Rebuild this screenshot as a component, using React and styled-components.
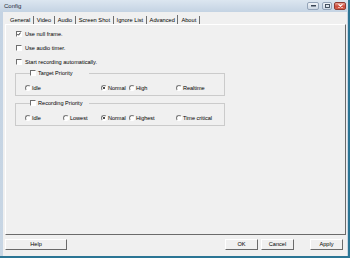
import React from 'react';
import styled, { createGlobalStyle } from 'styled-components';

const Global = createGlobalStyle`
  html, body { margin: 0; padding: 0; background: #f0f0f0; }
  body { font-family: "Liberation Sans", Arial, sans-serif; }
`;

const Window = styled.div`
  width: 350px;
  height: 258px;
  box-sizing: border-box;
  display: flex;
  flex-direction: column;
  background: linear-gradient(#dce6f0, #c4d3e3 12px, #c8d6e4);
  border-right: 2px solid #2b7594;
  border-bottom: 2px solid #2b7594;
  font-size: 5.6px;
  color: #000;
`;

const TitleBar = styled.div`
  flex: none;
  height: 12px;
  display: flex;
  align-items: center;
  padding: 0 2px 0 4px;
`;

const Title = styled.span`
  flex: 1;
  font-size: 6px;
  color: #1d2a38;
`;

const Controls = styled.div`
  display: flex;
  align-items: center;
`;

const Ctrl = styled.div`
  width: ${p => p.$w}px;
  height: 8px;
  margin-left: ${p => p.$ml}px;
  box-sizing: border-box;
  border: 1px solid ${p => (p.$close ? '#8e3b33' : '#94a4b8')};
  border-radius: 2px;
  background: ${p =>
    p.$close
      ? 'linear-gradient(#eba596, #cd4b3d 55%, #d8634f)'
      : 'linear-gradient(#f1f5f9, #dbe3ec 55%, #ced9e5)'};
  display: flex;
  align-items: center;
  justify-content: center;
`;

const Client = styled.div`
  flex: 1;
  margin: 0 1px 0 3px;
  background: #f0f0f0;
  display: flex;
  flex-direction: column;
  padding: 2px 1px 6px 2px;
  min-height: 0;
`;

const TabStrip = styled.div`
  flex: none;
  height: 10px;
  display: flex;
  align-items: flex-start;
  padding-left: 2px;
  font-size: 5.7px;
`;

const Tab = styled.div`
  height: ${p => (p.$active ? 9 : 8)}px;
  margin-top: ${p => (p.$active ? 1 : 2)}px;
  padding: 0 2.5px 0 3px;
  display: flex;
  align-items: center;
  border-right: 1px solid #6f6f6f;
  white-space: nowrap;
`;

const Panel = styled.div`
  flex: 1;
  box-sizing: border-box;
  border: 1px solid;
  border-color: #ffffff #6b6b6b #6b6b6b #ffffff;
  padding: 5px 0 0 9px;
  display: flex;
  flex-direction: column;
`;

const Rows = styled.div`
  display: flex;
  flex-direction: column;
  gap: 6px;
`;

const CheckRow = styled.label`
  height: 8px;
  display: flex;
  align-items: center;
  gap: 3px;
  padding-left: 1px;
  white-space: nowrap;
`;

const Box = styled.span`
  flex: none;
  width: 6px;
  height: 6px;
  box-sizing: border-box;
  border: 1px solid;
  border-color: #6e6e6e #ffffff #ffffff #6e6e6e;
  background: #ffffff;
  display: inline-flex;
  align-items: center;
  justify-content: center;
`;

const Group = styled.fieldset`
  margin: ${p => p.$mt}px 0 0 0;
  width: 210px;
  box-sizing: border-box;
  border: 1px solid #cbcbcb;
  padding: 0 0 3px 9px;
  min-inline-size: 0;
`;

const Legend = styled.legend`
  margin-left: 5px;
  padding: 0;
  width: 59px;
  height: 8px;
  display: flex;
  align-items: center;
  gap: 2px;
  white-space: nowrap;
`;

const RadioGrid = styled.div`
  margin-top: 7px;
  height: 8px;
  display: grid;
  grid-template-columns: 38px 38px 28px 47px auto;
  align-items: center;
`;

const RadioItem = styled.label`
  grid-column: ${p => p.$col};
  display: flex;
  align-items: center;
  gap: 1px;
  white-space: nowrap;
  letter-spacing: -0.05px;
`;

const RadioDot = styled.span`
  flex: none;
  width: 6px;
  height: 6px;
  box-sizing: border-box;
  border-radius: 50%;
  border: 1px solid;
  border-color: #777777 #ffffff #ffffff #777777;
  background: #ffffff;
  display: inline-flex;
  align-items: center;
  justify-content: center;
  &::after {
    content: '';
    width: 2px;
    height: 2px;
    border-radius: 50%;
    background: ${p => (p.$on ? '#111' : 'transparent')};
  }
`;

const ButtonRow = styled.div`
  flex: none;
  margin-top: 4px;
  height: 11px;
  display: flex;
  padding-right: 3px;
`;

const Button = styled.button`
  width: ${p => p.$w}px;
  height: 11px;
  margin-left: ${p => (p.$auto ? 'auto' : `${p.$ml || 0}px`)};
  box-sizing: border-box;
  padding: 0;
  border: 1px solid;
  border-color: #ffffff #6a6a6a #6a6a6a #ffffff;
  background: #f0f0f0;
  font-family: "Liberation Sans", Arial, sans-serif;
  font-size: 5.6px;
  color: #000;
  line-height: 9px;
`;

const Check = ({ checked }) => (
  <Box>
    {checked && (
      <svg width="4" height="4" viewBox="0 0 4 4">
        <path d="M0.4 2 L1.5 3.2 L3.6 0.6" fill="none" stroke="#111" strokeWidth="0.9" />
      </svg>
    )}
  </Box>
);

const Radio = ({ col, on, children }) => (
  <RadioItem $col={col}>
    <RadioDot $on={on} />
    <span>{children}</span>
  </RadioItem>
);

const tabs = ['General', 'Video', 'Audio', 'Screen Shot', 'Ignore List', 'Advanced', 'About'];

export default function App() {
  return (
    <>
      <Global />
      <Window>
        <TitleBar>
          <Title>Config</Title>
          <Controls>
            <Ctrl $w={12} $ml={0}>
              <svg width="5" height="2" viewBox="0 0 5 2">
                <rect x="0" y="0" width="5" height="1.5" fill="#3a4656" />
              </svg>
            </Ctrl>
            <Ctrl $w={10} $ml={3}>
              <svg width="5" height="4" viewBox="0 0 5 4">
                <rect x="0.5" y="0.5" width="4" height="3" fill="none" stroke="#3a4656" strokeWidth="0.9" />
              </svg>
            </Ctrl>
            <Ctrl $w={12} $ml={2} $close>
              <svg width="5" height="4" viewBox="0 0 5 4">
                <path d="M0.5 0.3 L4.5 3.7 M4.5 0.3 L0.5 3.7" stroke="#fff" strokeWidth="1.1" />
              </svg>
            </Ctrl>
          </Controls>
        </TitleBar>
        <Client>
          <TabStrip>
            {tabs.map(t => (
              <Tab key={t} $active={t === 'Advanced'}>{t}</Tab>
            ))}
          </TabStrip>
          <Panel>
            <Rows>
              <CheckRow><Check checked /><span>Use null frame.</span></CheckRow>
              <CheckRow><Check /><span>Use audio timer.</span></CheckRow>
              <CheckRow><Check /><span>Start recording automatically.</span></CheckRow>
            </Rows>
            <Group $mt={3}>
              <Legend><Check /><span>Target Priority</span></Legend>
              <RadioGrid>
                <Radio col={1}>Idle</Radio>
                <Radio col={3} on>Normal</Radio>
                <Radio col={4}>High</Radio>
                <Radio col={5}>Realtime</Radio>
              </RadioGrid>
            </Group>
            <Group $mt={3}>
              <Legend><Check /><span>Recording Priority</span></Legend>
              <RadioGrid>
                <Radio col={1}>Idle</Radio>
                <Radio col={2}>Lowest</Radio>
                <Radio col={3} on>Normal</Radio>
                <Radio col={4}>Highest</Radio>
                <Radio col={5}>Time critical</Radio>
              </RadioGrid>
            </Group>
          </Panel>
          <ButtonRow>
            <Button $w={62}>Help</Button>
            <Button $w={33} $auto>OK</Button>
            <Button $w={33} $ml={3}>Cancel</Button>
            <Button $w={33} $ml={16}>Apply</Button>
          </ButtonRow>
        </Client>
      </Window>
    </>
  );
}
